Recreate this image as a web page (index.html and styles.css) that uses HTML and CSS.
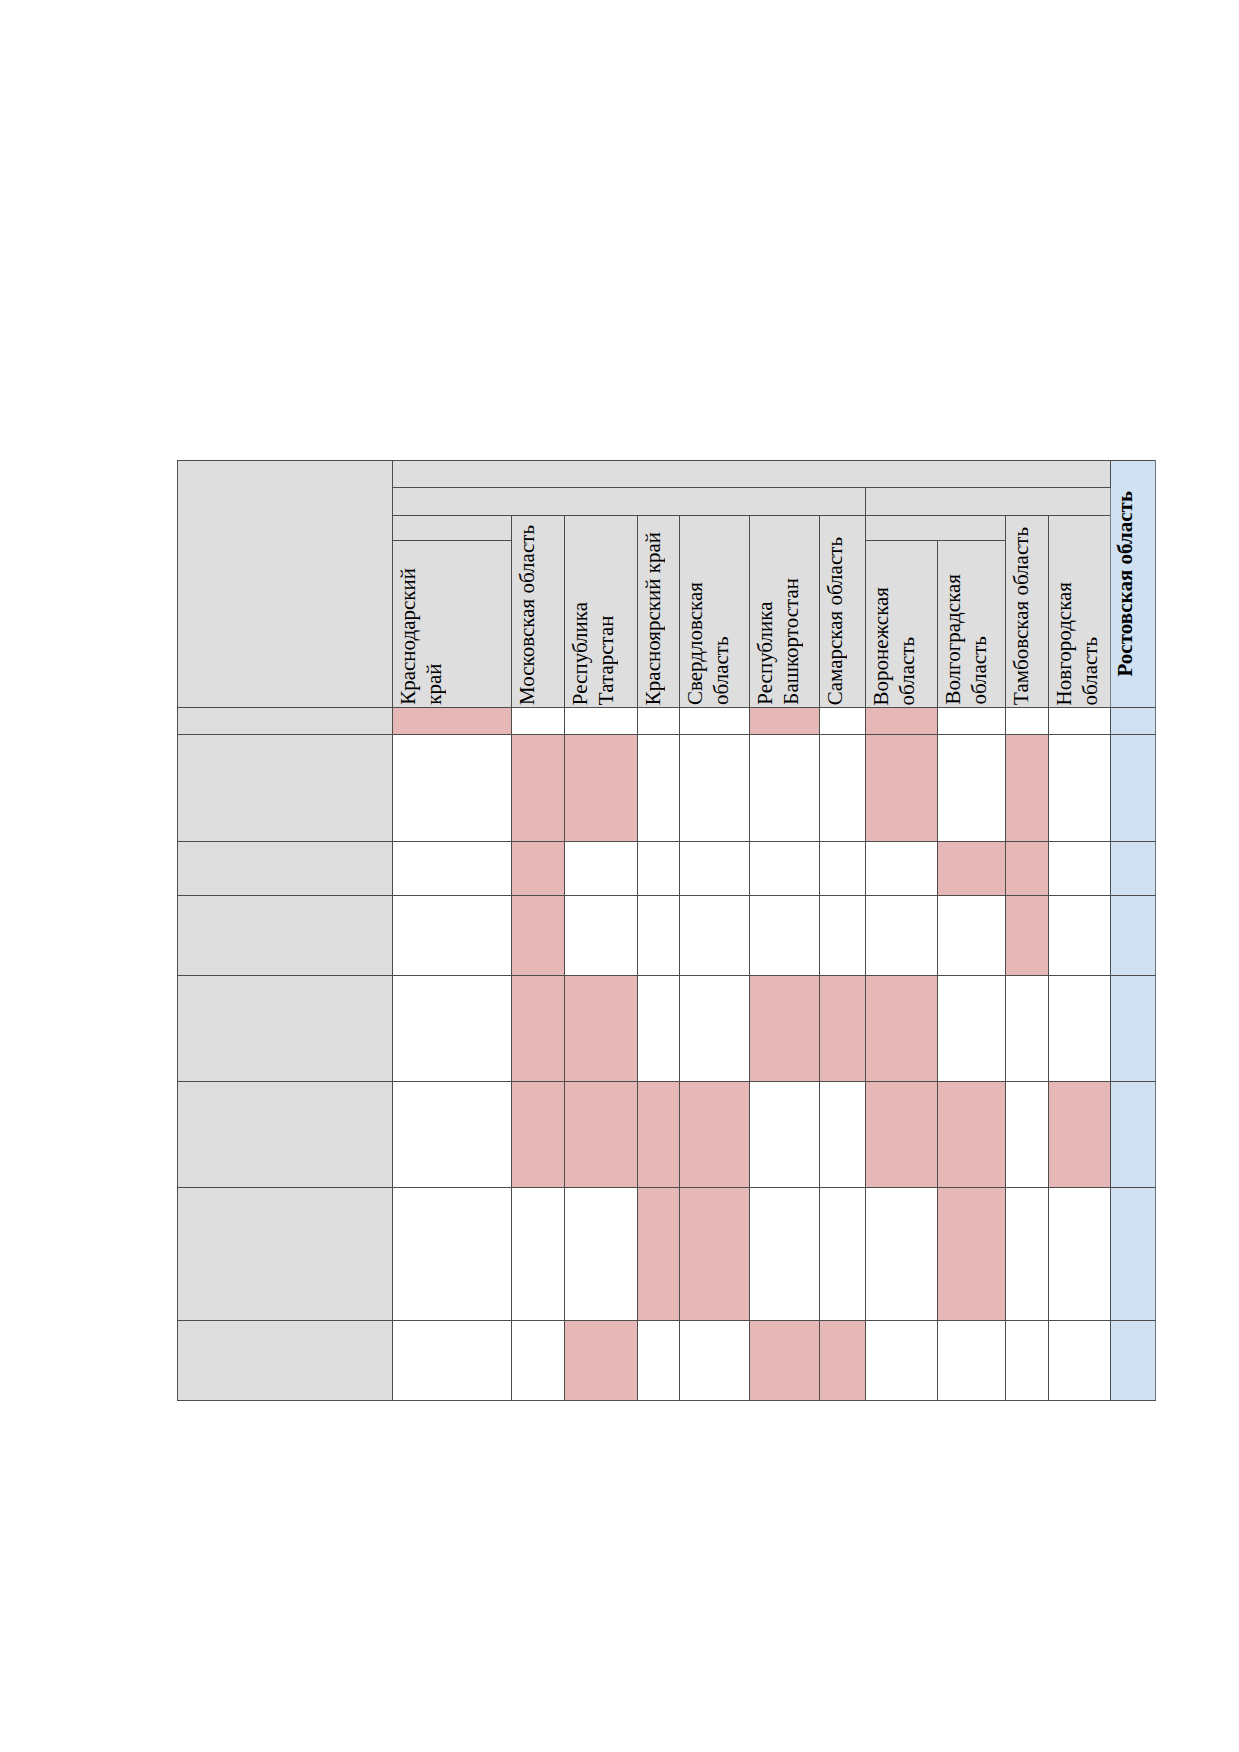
FILE: index.html
```html
<!DOCTYPE html>
<html lang="ru">
<head>
<meta charset="utf-8">
<title>Регионы</title>
<link rel="stylesheet" href="styles.css">
</head>
<body>
<div class="page">
<table class="grid">
<colgroup>
<col class="c-rh"><col class="c-kd"><col class="c-mo"><col class="c-ta"><col class="c-kr"><col class="c-sv"><col class="c-ba"><col class="c-sa"><col class="c-vr"><col class="c-vg"><col class="c-tb"><col class="c-nv"><col class="c-ro">
</colgroup>
<tr class="h1">
<td class="corner" rowspan="4"></td>
<td class="hd" colspan="11"></td>
<td class="rostov" rowspan="4"><div class="vt bold">Ростовская область</div></td>
</tr>
<tr class="h2">
<td class="hd" colspan="7"></td>
<td class="hd" colspan="4"></td>
</tr>
<tr class="h3">
<td class="hd"></td>
<td class="hd lbl" rowspan="2"><div class="vt">Московская область</div></td>
<td class="hd lbl" rowspan="2"><div class="vt">Республика<br>Татарстан</div></td>
<td class="hd lbl" rowspan="2"><div class="vt">Красноярский край</div></td>
<td class="hd lbl" rowspan="2"><div class="vt">Свердловская<br>область</div></td>
<td class="hd lbl" rowspan="2"><div class="vt">Республика<br>Башкортостан</div></td>
<td class="hd lbl" rowspan="2"><div class="vt">Самарская область</div></td>
<td class="hd" colspan="2"></td>
<td class="hd lbl" rowspan="2"><div class="vt">Тамбовская область</div></td>
<td class="hd lbl" rowspan="2"><div class="vt">Новгородская<br>область</div></td>
</tr>
<tr class="h4">
<td class="hd lbl"><div class="vt">Краснодарский<br>край</div></td>
<td class="hd lbl"><div class="vt">Воронежская<br>область</div></td>
<td class="hd lbl"><div class="vt">Волгоградская<br>область</div></td>
</tr>
<tr class="d1">
<td class="rh"></td><td class="p"></td><td></td><td></td><td></td><td></td><td class="p"></td><td></td><td class="p"></td><td></td><td></td><td></td><td class="bl"></td>
</tr>
<tr class="d2">
<td class="rh"></td><td></td><td class="p"></td><td class="p"></td><td></td><td></td><td></td><td></td><td class="p"></td><td></td><td class="p"></td><td></td><td class="bl"></td>
</tr>
<tr class="d3">
<td class="rh"></td><td></td><td class="p"></td><td></td><td></td><td></td><td></td><td></td><td></td><td class="p"></td><td class="p"></td><td></td><td class="bl"></td>
</tr>
<tr class="d4">
<td class="rh"></td><td></td><td class="p"></td><td></td><td></td><td></td><td></td><td></td><td></td><td></td><td class="p"></td><td></td><td class="bl"></td>
</tr>
<tr class="d5">
<td class="rh"></td><td></td><td class="p"></td><td class="p"></td><td></td><td></td><td class="p"></td><td class="p"></td><td class="p"></td><td></td><td></td><td></td><td class="bl"></td>
</tr>
<tr class="d6">
<td class="rh"></td><td></td><td class="p"></td><td class="p"></td><td class="p"></td><td class="p"></td><td></td><td></td><td class="p"></td><td class="p"></td><td></td><td class="p"></td><td class="bl"></td>
</tr>
<tr class="d7">
<td class="rh"></td><td></td><td></td><td></td><td class="p"></td><td class="p"></td><td></td><td></td><td></td><td class="p"></td><td></td><td></td><td class="bl"></td>
</tr>
<tr class="d8">
<td class="rh"></td><td></td><td></td><td class="p"></td><td></td><td></td><td class="p"></td><td class="p"></td><td></td><td></td><td></td><td></td><td class="bl"></td>
</tr>
</table>
</div>
</body>
</html>
```
FILE: styles.css
```css
html, body {
  margin: 0;
  padding: 0;
  background: #ffffff;
}

body {
  font-family: "Liberation Serif", "Times New Roman", serif;
  color: #000000;
}

.page {
  padding: 460px 0 0 177px;
}

.grid {
  border-collapse: collapse;
  table-layout: fixed;
  width: 979px;
  background: #ffffff;
}

.grid td {
  border: 1px solid #4d4d4d;
  padding: 0;
  background: #ffffff;
}

.c-rh { width: 215px; }
.c-kd { width: 119px; }
.c-mo { width: 53px; }
.c-ta { width: 73px; }
.c-kr { width: 42px; }
.c-sv { width: 70px; }
.c-ba { width: 70px; }
.c-sa { width: 46px; }
.c-vr { width: 72px; }
.c-vg { width: 68px; }
.c-tb { width: 43px; }
.c-nv { width: 62px; }
.c-ro { width: 45px; }

.h1 { height: 27px; }
.h2 { height: 28px; }
.h3 { height: 25px; }
.h4 { height: 167px; }

.d1 { height: 27px; }
.d2 { height: 107px; }
.d3 { height: 54px; }
.d4 { height: 80px; }
.d5 { height: 106px; }
.d6 { height: 106px; }
.d7 { height: 133px; }
.d8 { height: 80px; }

.grid td.corner,
.grid td.rh {
  background: #dedede;
}

.grid td.hd {
  background: #dfdedf;
}

.grid td.lbl {
  vertical-align: bottom;
  padding: 0 0 2px 2px;
}

.grid td.rostov {
  background: #cfe1f2;
  vertical-align: middle;
  padding: 0 0 0 1px;
  border-left-color: #7a7f88;
  border-right-color: #6f747c;
}

.grid td.p {
  background: #e5b8b7;
}

.grid td.bl {
  background: #cfe1f2;
  border-right-color: #6f747c;
}

.vt {
  writing-mode: vertical-rl;
  transform: rotate(180deg);
  white-space: nowrap;
  font-size: 21px;
  line-height: 26px;
}

.vt.bold {
  font-weight: bold;
  font-size: 21px;
  margin: 0 auto 0 0;
}
```
